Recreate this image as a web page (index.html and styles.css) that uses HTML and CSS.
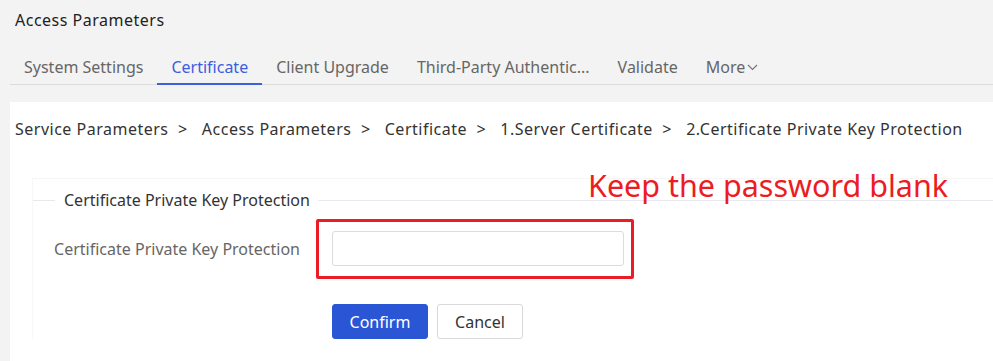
FILE: index.html
```html
<!DOCTYPE html>
<html lang="en">
<head>
    <meta charset="UTF-8">
    <meta name="viewport" content="width=device-width, initial-scale=1.0">
    <title>Access Parameters</title>
    <link rel="stylesheet" href="styles.css">
</head>
<body>
    <header class="page-header">
        <h1>Access Parameters</h1>
    </header>

    <nav class="tabs">
        <a class="tab">System Settings</a>
        <a class="tab active">Certificate</a>
        <a class="tab">Client Upgrade</a>
        <a class="tab">Third-Party Authentic...</a>
        <a class="tab">Validate</a>
        <a class="tab">More<svg class="chevron" width="11" height="7" viewBox="0 0 11 7"><path d="M1 1l4.5 4.5L10 1" fill="none" stroke="#777" stroke-width="1.2"/></svg></a>
    </nav>

    <div class="panel">
        <div class="breadcrumb">
            <span>Service Parameters</span><span class="sep">&gt;</span>
            <span>Access Parameters</span><span class="sep">&gt;</span>
            <span>Certificate</span><span class="sep">&gt;</span>
            <span>1.Server Certificate</span><span class="sep">&gt;</span>
            <span>2.Certificate Private Key Protection</span>
        </div>

        <div class="note">Keep the password blank</div>

        <div class="section">
            <div class="section-title">
                <span class="line short"></span>
                <span class="title-text">Certificate Private Key Protection</span>
                <span class="line"></span>
            </div>

            <form class="form" onsubmit="event.preventDefault()">
                <div class="form-row">
                    <label class="form-label" for="keypass">Certificate Private Key Protection</label>
                    <div class="field">
                        <input id="keypass" type="password">
                        <div class="highlight"></div>
                    </div>
                </div>
                <div class="actions">
                    <button type="submit" class="btn primary">Confirm</button>
                    <button type="button" class="btn">Cancel</button>
                </div>
            </form>
        </div>
    </div>
</body>
</html>
```

FILE: styles.css
```css
body {
    margin: 0;
    padding: 0;
    background-color: #f3f3f3;
    font-family: "Noto Sans", "Open Sans", Arial, sans-serif;
    color: #333;
    height: 361px;
    overflow: hidden;
}

.page-header {
    padding: 10px 15px 20px;
}

.page-header h1 {
    margin: 0;
    font-size: 16px;
    line-height: 20px;
    letter-spacing: 0.5px;
    font-weight: normal;
    color: #222;
}

.tabs {
    display: flex;
    margin-left: 10px;
    border-bottom: 1px solid #dcdcdc;
}

.tab {
    display: flex;
    align-items: center;
    padding: 7px 14px 6px;
    line-height: 20px;
    font-size: 16px;
    color: #666;
    border-bottom: 2px solid transparent;
    margin-bottom: -1px;
    cursor: pointer;
}

.tab.active {
    color: #3c5ee0;
    border-bottom-color: #3c5ee0;
}

.chevron {
    margin-left: 2px;
    margin-top: 1px;
}

.panel {
    position: relative;
    box-sizing: border-box;
    height: 259px;
    overflow: hidden;
    margin: 17px 0 0 10px;
    background-color: white;
    padding: 17px 0 0 5px;
}

.breadcrumb {
    font-size: 16px;
    line-height: 20px;
    letter-spacing: 0.5px;
    color: #333;
}

.breadcrumb .sep {
    margin: 0 9.5px;
}

.note {
    position: absolute;
    left: 578px;
    top: 63px;
    font-size: 30.5px;
    line-height: 40px;
    color: #ec1c24;
}

.section {
    margin: 39px 0 0 17px;
    border-top: 1px solid #f5f5f5;
    border-left: 1px solid #f7f7f7;
    padding-top: 11px;
}

.section-title {
    display: flex;
    align-items: center;
    line-height: 20px;
}

.section-title .line {
    flex: 1;
    height: 1px;
    background-color: #e8e8ee;
}

.section-title .line.short {
    flex: 0 0 22px;
}

.title-text {
    padding: 0 8px 0 9px;
    font-size: 16px;
    color: #333;
}

.form-row {
    display: flex;
    align-items: center;
    margin-top: 21px;
}

.form-label {
    width: 267px;
    padding-right: 32px;
    text-align: right;
    font-size: 16px;
    color: #666;
}

.field {
    position: relative;
}

.field input {
    display: block;
    box-sizing: border-box;
    width: 292px;
    height: 35px;
    border: 1px solid #dcdcdc;
    border-radius: 3px;
    outline: none;
}

.highlight {
    position: absolute;
    left: -16px;
    top: -12px;
    right: -10px;
    bottom: -13px;
    border: 3px solid #ec1c24;
    border-radius: 2px;
}

.actions {
    display: flex;
    gap: 9px;
    margin-top: 38px;
    padding-left: 299px;
}

.btn {
    height: 35px;
    padding: 0;
    font-family: inherit;
    font-size: 16px;
    background-color: white;
    color: #333;
    border: 1px solid #d9d9d9;
    border-radius: 3px;
    cursor: pointer;
}

.btn.primary {
    width: 96px;
    background-color: #2a56d6;
    border-color: #2a56d6;
    color: white;
}

.btn:not(.primary) {
    width: 86px;
}
```
